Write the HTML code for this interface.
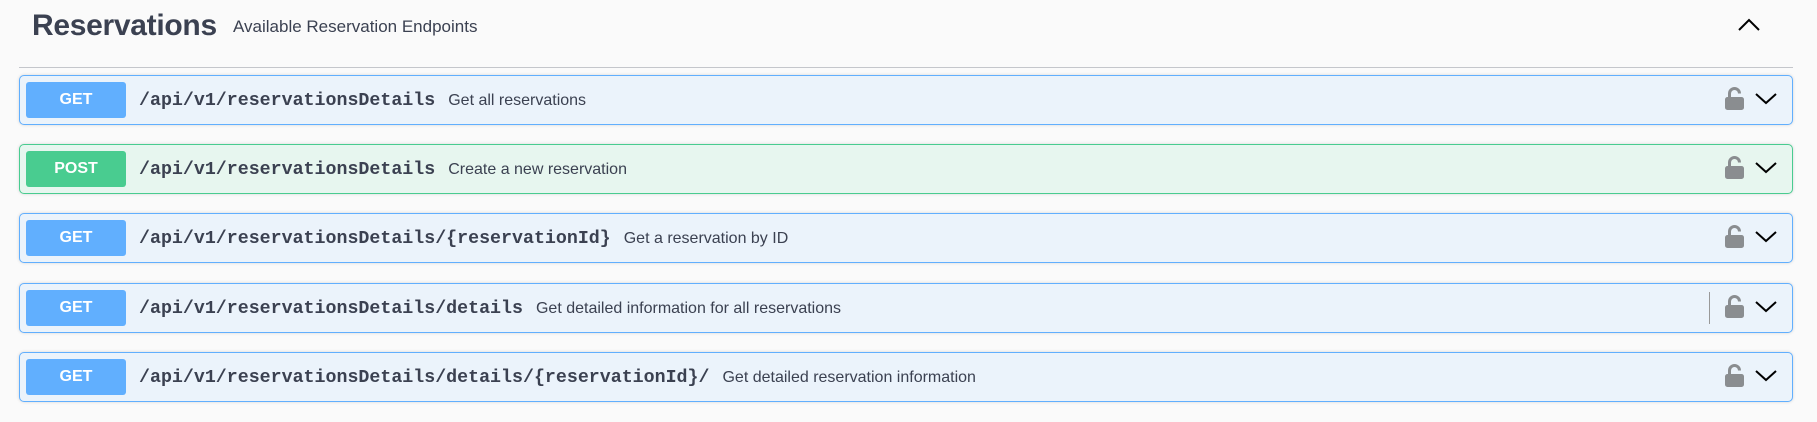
<!DOCTYPE html>
<html><head><meta charset="utf-8"><style>
body{margin:0;background:#fafafa;width:1817px;height:422px;overflow:hidden;font-family:"Liberation Sans",sans-serif;color:#3b4151;position:relative}
.h{position:absolute;left:19px;top:0;width:1774px;height:67px;border-bottom:1px solid #c4c6cb}
.t{position:absolute;left:13px;top:9px;font-size:30px;font-weight:bold;letter-spacing:-0.3px}
.s{position:absolute;left:214px;top:17px;font-size:17px}
.op{position:absolute;left:19px;width:1772px;height:48px;border:1px solid #61affe;background:#ebf3fb;border-radius:5px;box-shadow:0 0 3px rgba(0,0,0,.15)}
.op.post{border-color:#49cc90;background:#e7f6ef}
.m{position:absolute;left:6px;top:6px;width:100px;height:36px;border-radius:3px;background:#61affe;color:#fff;font-weight:bold;font-size:16px;text-align:center;line-height:36px}
.post .m{background:#49cc90}
.p{position:absolute;left:119px;top:15px;font-family:"Liberation Mono",monospace;font-weight:bold;font-size:18.3px;color:#3b4151}
.d{font-family:"Liberation Sans",sans-serif;font-weight:normal;font-size:16px;margin-left:13px}
.ic{position:absolute;left:1704px;top:10px}
.dv{position:absolute;left:1689px;top:8px;width:1px;height:32px;background:#999}
</style></head><body>
<div class="h"><span class="t">Reservations</span><span class="s">Available Reservation Endpoints</span>
<svg style="position:absolute;left:1718px;top:18px" width="24" height="14" viewBox="0 0 24 14"><path d="M2 12L12 2L22 12" fill="none" stroke="#000" stroke-width="2"/></svg></div>

<div class="op" style="top:75px"><div class="m">GET</div><div class="p">/api/v1/reservationsDetails<span class="d">Get all reservations</span></div>
<svg class="ic" width="60" height="30"><path d="M5.5 11V7.5a5 5 0 0 1 10 0" fill="none" stroke="#8a8d90" stroke-width="3"/><rect x="1" y="11" width="19" height="13" rx="2.5" fill="#8a8d90"/><path d="M32 8L42 17L52 8" fill="none" stroke="#000" stroke-width="2"/></svg></div>

<div class="op post" style="top:144px"><div class="m">POST</div><div class="p">/api/v1/reservationsDetails<span class="d">Create a new reservation</span></div>
<svg class="ic" width="60" height="30"><path d="M5.5 11V7.5a5 5 0 0 1 10 0" fill="none" stroke="#8a8d90" stroke-width="3"/><rect x="1" y="11" width="19" height="13" rx="2.5" fill="#8a8d90"/><path d="M32 8L42 17L52 8" fill="none" stroke="#000" stroke-width="2"/></svg></div>

<div class="op" style="top:213px"><div class="m">GET</div><div class="p">/api/v1/reservationsDetails/{reservationId}<span class="d">Get a reservation by ID</span></div>
<svg class="ic" width="60" height="30"><path d="M5.5 11V7.5a5 5 0 0 1 10 0" fill="none" stroke="#8a8d90" stroke-width="3"/><rect x="1" y="11" width="19" height="13" rx="2.5" fill="#8a8d90"/><path d="M32 8L42 17L52 8" fill="none" stroke="#000" stroke-width="2"/></svg></div>

<div class="op" style="top:283px"><div class="m">GET</div><div class="p">/api/v1/reservationsDetails/details<span class="d">Get detailed information for all reservations</span></div>
<div class="dv"></div>
<svg class="ic" width="60" height="30"><path d="M5.5 11V7.5a5 5 0 0 1 10 0" fill="none" stroke="#8a8d90" stroke-width="3"/><rect x="1" y="11" width="19" height="13" rx="2.5" fill="#8a8d90"/><path d="M32 8L42 17L52 8" fill="none" stroke="#000" stroke-width="2"/></svg></div>

<div class="op" style="top:352px"><div class="m">GET</div><div class="p">/api/v1/reservationsDetails/details/{reservationId}/<span class="d">Get detailed reservation information</span></div>
<svg class="ic" width="60" height="30"><path d="M5.5 11V7.5a5 5 0 0 1 10 0" fill="none" stroke="#8a8d90" stroke-width="3"/><rect x="1" y="11" width="19" height="13" rx="2.5" fill="#8a8d90"/><path d="M32 8L42 17L52 8" fill="none" stroke="#000" stroke-width="2"/></svg></div>
</body></html>
